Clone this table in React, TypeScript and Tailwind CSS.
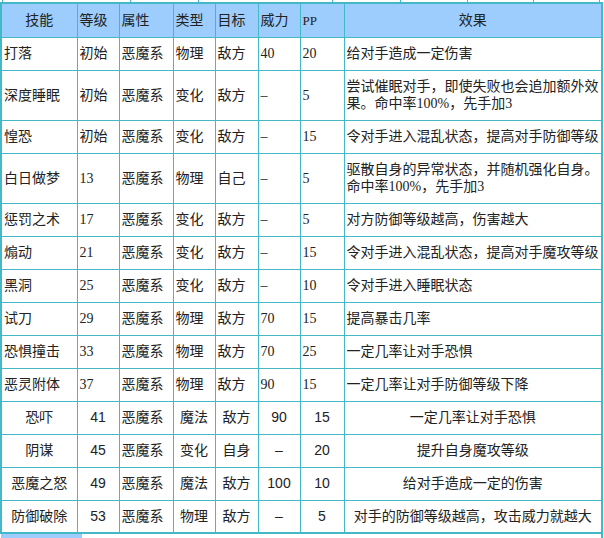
import React from "react";

type Skill = {
  name: string;
  level: string;
  attr: string;
  kind: string;
  target: string;
  power: string;
  pp: string;
  effect: React.ReactNode;
  tall?: boolean;
};

const oldRows: Skill[] = [
  { name: "打落", level: "初始", attr: "恶魔系", kind: "物理", target: "敌方", power: "40", pp: "20", effect: "给对手造成一定伤害" },
  {
    name: "深度睡眠",
    level: "初始",
    attr: "恶魔系",
    kind: "变化",
    target: "敌方",
    power: "–",
    pp: "5",
    effect: (
      <>
        尝试催眠对手，即使失败也会追加额外效
        <br />
        果。命中率100%，先手加3
      </>
    ),
    tall: true,
  },
  { name: "惶恐", level: "初始", attr: "恶魔系", kind: "变化", target: "敌方", power: "–", pp: "15", effect: "令对手进入混乱状态，提高对手防御等级" },
  {
    name: "白日做梦",
    level: "13",
    attr: "恶魔系",
    kind: "物理",
    target: "自己",
    power: "–",
    pp: "5",
    effect: (
      <>
        驱散自身的异常状态，并随机强化自身。
        <br />
        命中率100%，先手加3
      </>
    ),
    tall: true,
  },
  { name: "惩罚之术", level: "17", attr: "恶魔系", kind: "变化", target: "敌方", power: "–", pp: "5", effect: "对方防御等级越高，伤害越大" },
  { name: "煽动", level: "21", attr: "恶魔系", kind: "变化", target: "敌方", power: "–", pp: "15", effect: "令对手进入混乱状态，提高对手魔攻等级" },
  { name: "黑洞", level: "25", attr: "恶魔系", kind: "变化", target: "敌方", power: "–", pp: "10", effect: "令对手进入睡眠状态" },
  { name: "试刀", level: "29", attr: "恶魔系", kind: "物理", target: "敌方", power: "70", pp: "15", effect: "提高暴击几率" },
  { name: "恐惧撞击", level: "33", attr: "恶魔系", kind: "物理", target: "敌方", power: "70", pp: "25", effect: "一定几率让对手恐惧" },
  { name: "恶灵附体", level: "37", attr: "恶魔系", kind: "物理", target: "敌方", power: "90", pp: "15", effect: "一定几率让对手防御等级下降" },
];

const newRows: Skill[] = [
  { name: "恐吓", level: "41", attr: "恶魔系", kind: "魔法", target: "敌方", power: "90", pp: "15", effect: "一定几率让对手恐惧" },
  { name: "阴谋", level: "45", attr: "恶魔系", kind: "变化", target: "自身", power: "–", pp: "20", effect: "提升自身魔攻等级" },
  { name: "恶魔之怒", level: "49", attr: "恶魔系", kind: "魔法", target: "敌方", power: "100", pp: "10", effect: "给对手造成一定的伤害" },
  { name: "防御破除", level: "53", attr: "恶魔系", kind: "物理", target: "敌方", power: "–", pp: "5", effect: "对手的防御等级越高，攻击威力就越大" },
];

const cell = "border border-[#45b8c8] px-[2px] py-0 align-middle";

export default function App() {
  return (
    <div className="w-[604px] h-[538px] overflow-hidden bg-white text-[14px] leading-[17px] text-[#222]">
      {/* edge of the table above */}
      <div className="flex h-[2px] pl-[2px]">
        <div className="w-[128px] border-l border-[#45b8c8]" />
        <div className="w-[68px] border-l border-[#45b8c8]" />
        <div className="w-[134px] border-l border-[#45b8c8]" />
        <div className="w-[68px] border-l border-[#45b8c8]" />
        <div className="w-[67px] border-l border-[#45b8c8]" />
        <div className="w-[66px] border-l border-[#45b8c8]" />
        <div className="w-[67px] border-x border-[#45b8c8]" />
      </div>

      <table className="w-[603px] table-fixed border-collapse border-2 border-[#45b8c8]">
        <colgroup>
          <col className="w-[76px]" />
          <col className="w-[42px]" />
          <col className="w-[54px]" />
          <col className="w-[42px]" />
          <col className="w-[43px]" />
          <col className="w-[42px]" />
          <col className="w-[44px]" />
          <col className="w-[258px]" />
        </colgroup>
        <thead>
          <tr className="bg-[#9ccdfc] font-['Liberation_Serif','Noto_Sans_CJK_SC',serif]">
            <th className={`${cell} h-[34px] text-center font-normal`}>技能</th>
            <th className={`${cell} text-left font-normal`}>等级</th>
            <th className={`${cell} text-left font-normal`}>属性</th>
            <th className={`${cell} text-left font-normal`}>类型</th>
            <th className={`${cell} text-left font-normal`}>目标</th>
            <th className={`${cell} text-left font-normal`}>威力</th>
            <th className={`${cell} text-left font-normal text-[13px]`}>PP</th>
            <th className={`${cell} text-center font-normal`}>效果</th>
          </tr>
        </thead>
        <tbody>
          {oldRows.map((r) => (
            <tr key={r.name} className="font-['Liberation_Serif','Noto_Sans_CJK_SC',serif]">
              <td className={`${cell} ${r.tall ? "h-[50px]" : "h-[33px]"}`}>{r.name}</td>
              <td className={cell}>{r.level}</td>
              <td className={cell}>{r.attr}</td>
              <td className={cell}>{r.kind}</td>
              <td className={cell}>{r.target}</td>
              <td className={cell}>{r.power}</td>
              <td className={cell}>{r.pp}</td>
              <td className={cell}>{r.effect}</td>
            </tr>
          ))}
          {newRows.map((r) => (
            <tr key={r.name} className="text-center font-['Liberation_Sans','Noto_Sans_CJK_SC',sans-serif]">
              <td className={`${cell} h-[33px]`}>{r.name}</td>
              <td className={cell}>{r.level}</td>
              <td className={`${cell} text-left`}>{r.attr}</td>
              <td className={cell}>{r.kind}</td>
              <td className={cell}>{r.target}</td>
              <td className={cell}>{r.power}</td>
              <td className={cell}>{r.pp}</td>
              <td className={cell}>{r.effect}</td>
            </tr>
          ))}
        </tbody>
      </table>

      {/* start of the next block */}
      <div className="flex h-[5px] w-[603px] border-r-2 border-[#45b8c8]">
        <div className="ml-[1px] w-[81px] bg-[#9ccdfc]" />
      </div>
    </div>
  );
}
